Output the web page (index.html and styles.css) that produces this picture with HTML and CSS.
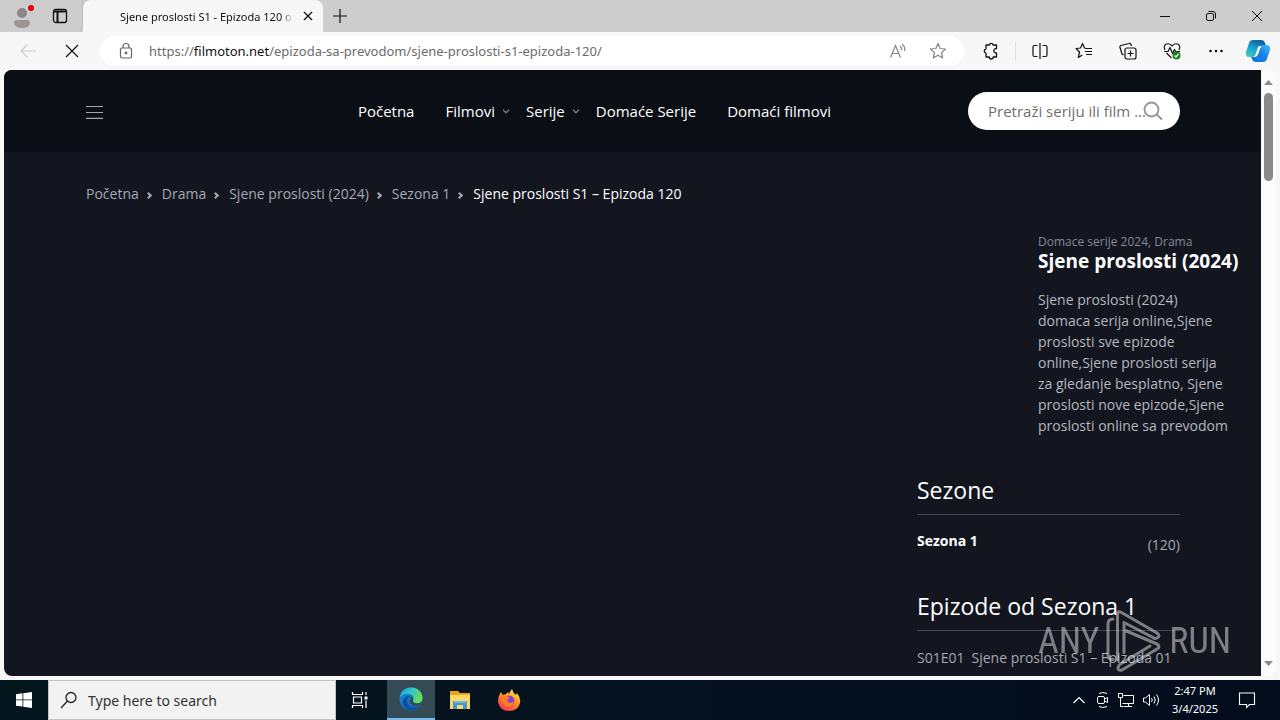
FILE: index.html
```html
<!DOCTYPE html>
<html lang="hr">
<head>
<meta charset="utf-8">
<meta name="viewport" content="width=device-width, initial-scale=1">
<title>Sjene proslosti S1 - Epizoda 120</title>
<link rel="stylesheet" href="styles.css">
</head>
<body>
<div class="desktop">
  <header class="tabbar">
    <div class="tab-tools">
      <button class="icon-btn" aria-label="Profile"><svg width="24" height="28" viewBox="0 0 24 28"><circle cx="11" cy="11" r="5" fill="#8c8684"/><path d="M3 21q0-3 3-3h10q3 0 3 3-1 5-8 5t-8-5z" fill="#9c9693"/><circle cx="20" cy="6" r="3" fill="#e3000b"/></svg></button>
      <button class="icon-btn" aria-label="Tab actions"><svg width="16" height="16" viewBox="0 0 16 16" fill="none" stroke="#111" stroke-width="1.3"><rect x="1.5" y="1.5" width="13" height="13" rx="2"/><path d="M2 3.5h12M5.5 4v10" stroke-width="2"/></svg></button>
    </div>
    <div class="tab">
      <span class="tab-title">Sjene proslosti S1 - Epizoda 120 o</span>
      <button class="icon-btn" aria-label="Close tab"><svg width="10" height="10" viewBox="0 0 10 10" stroke="#111" stroke-width="1.3"><path d="M1 1l8 8M9 1l-8 8"/></svg></button>
    </div>
    <button class="icon-btn new-tab" aria-label="New tab"><svg width="14" height="14" viewBox="0 0 14 14" stroke="#111" stroke-width="1.2"><path d="M7 0v14M0 7h14"/></svg></button>
    <div class="win-controls">
      <button class="icon-btn" aria-label="Minimize"><svg width="12" height="12" viewBox="0 0 12 12" stroke="#111"><path d="M1 6.5h10"/></svg></button>
      <button class="icon-btn" aria-label="Restore"><svg width="12" height="12" viewBox="0 0 12 12" fill="none" stroke="#111"><rect x="1.500" y="3.500" width="7" height="7" rx="1.500"/><path d="M3.500 1.500h4.500q2.500 0 2.500 2.500v4.500"/></svg></button>
      <button class="icon-btn" aria-label="Close"><svg width="12" height="12" viewBox="0 0 12 12" stroke="#111"><path d="M1 1l10 10M11 1L1 11"/></svg></button>
    </div>
  </header>

  <div class="toolbar">
    <button class="icon-btn" aria-label="Back"><svg width="18" height="16" viewBox="0 0 18 16" fill="none" stroke="#ccc" stroke-width="1.2"><path d="M17 8H2M8.500 1.500L2 8l6.500 6.500"/></svg></button>
    <button class="icon-btn" aria-label="Stop"><svg width="14" height="14" viewBox="0 0 14 14" stroke="#111" stroke-width="1.200"><path d="M1 1l12 12M13 1L1 13"/></svg></button>
    <div class="address">
      <svg width="14" height="18" viewBox="0 0 14 18" fill="none" stroke="#666" stroke-width="1.200"><rect x="1.500" y="6" width="11" height="10" rx="1.500"/><path d="M4 6V4.500a3 3 0 0 1 6 0V6"/><circle cx="7" cy="11" r=".8" fill="#666"/></svg>
      <a class="url" href="#"><span>https://</span><b>filmoton.net</b><span>/epizoda-sa-prevodom/sjene-proslosti-s1-epizoda-120/</span></a>
      <button class="icon-btn" aria-label="Read aloud"><svg width="18" height="16" viewBox="0 0 18 16" fill="none" stroke="#858585" stroke-width="1.200"><path d="M1.500 14.500L6.500 2.500l5 12M3 10.500h7M11 3q2 1.500 1.500 4M13 1q3.500 2.500 2.500 7"/></svg></button>
      <button class="icon-btn" aria-label="Add to favorites"><svg width="18" height="18" viewBox="0 0 18 18" fill="none" stroke="#858585" stroke-width="1.200" stroke-linejoin="round"><path d="M9 1.500l2.200 5 5.300.5-4 3.600 1.200 5.400L9 13.200 4.300 16l1.200-5.400-4-3.600 5.300-.5z"/></svg></button>
    </div>
    <div class="actions">
      <button class="icon-btn ext" aria-label="Extensions"><svg width="18" height="18" viewBox="0 0 18 18" fill="none" stroke="#111" stroke-width="1.300" stroke-linejoin="round"><path d="M4 3h3.200a2 2 0 0 1 3.900 0H14.500v3.600h-1a2.200 2.200 0 0 0 0 4.300h1V15h-3.300a2 2 0 0 1-4 0H4v-3.800a2.200 2.200 0 0 1 0-4.300z"/></svg></button>
      <button class="icon-btn" aria-label="Split screen"><svg width="18" height="18" viewBox="0 0 18 18" fill="none" stroke="#111" stroke-width="1.200"><path d="M9 1v16M6.500 3.500H3.500q-1.500 0-1.500 1.500v8q0 1.500 1.500 1.500h3M11.500 3.500h3Q16 3.500 16 5v8q0 1.500-1.500 1.500h-3"/></svg></button>
      <button class="icon-btn" aria-label="Favorites"><svg width="18" height="18" viewBox="0 0 18 18" fill="none" stroke="#111" stroke-width="1.200" stroke-linejoin="round"><path d="M11 6.500L9.500 6 7.500 1.500l-2 4.500-4.500.5 3.500 3.500-1.200 5.500 4-2.500M11 6.500h6M10 9.500h7M11 12.500h6"/></svg></button>
      <button class="icon-btn" aria-label="Collections"><svg width="18" height="18" viewBox="0 0 18 18" fill="none" stroke="#111" stroke-width="1.200"><rect x="6" y="6" width="11" height="11" rx="2"/><path d="M11.500 8.500v6M8.500 11.500h6M4.500 13L3 12 1 5.500q-.5-1.500 1-2L10 1.500q1.500-.5 2 1l.5 1.500"/></svg></button>
      <button class="icon-btn" aria-label="Browser essentials"><svg width="18" height="18" viewBox="0 0 18 18" fill="none" stroke="#111" stroke-width="1.200" stroke-linejoin="round"><path d="M2 8Q0 3.500 3.500 2 7 1 9 4q2-3 5.500-2Q18 3.500 16 8M3.500 11l5 5M1 9.500h4l2-4 2.500 6 2-4 1 2H17"/><circle cx="13.500" cy="13.500" r="4" fill="#198019" stroke="none"/><path d="M11.500 13.500l1.500 1.500 2.500-3" stroke="#fff"/></svg></button>
      <button class="icon-btn" aria-label="Settings and more"><svg width="18" height="18" viewBox="0 0 18 18" fill="#111"><circle cx="3.500" cy="9" r="1.300"/><circle cx="9" cy="9" r="1.300"/><circle cx="14.500" cy="9" r="1.300"/></svg></button>
      <button class="icon-btn copilot" aria-label="Copilot"><svg width="26" height="24" viewBox="0 0 26 24"><defs><linearGradient id="ca" x1="0" y1="1" x2=".6" y2="0"><stop offset="0" stop-color="#55d1a0"/><stop offset=".5" stop-color="#17a8d8"/><stop offset="1" stop-color="#125f9f"/></linearGradient><linearGradient id="cb" x1="0" y1="1" x2="1" y2="0"><stop offset="0" stop-color="#0876dc"/><stop offset=".5" stop-color="#1b7fe8"/><stop offset="1" stop-color="#36c0f5"/></linearGradient></defs><path d="M8 1h8q3 0 4 3l1 3h-4q-3 0-4 3l-2 5q-1 3-4 3H4q-4 0-3-5l3-9q1-3 4-3z" fill="url(#ca)"/><path d="M18 6h3q5 0 4 5l-3 9q-1 3-4 3h-7q-3 0-4-3l-1-2h3q3 0 4-3l2-6q1-3 3-3z" fill="url(#cb)"/><path d="M14 7h3q-2 1-2.500 4L13 15q-1 2-3 2.500H9q1.500-1 2-3l1.500-5q.5-2 1.500-2.500z" fill="#fff"/></svg></button>
    </div>
  </div>

  <div class="viewport">
    <div class="page">
      <div class="site-header">
        <button class="icon-btn" aria-label="Izbornik"><svg width="17" height="15" viewBox="0 0 17 15" stroke="#a5a7ad" stroke-width="1.200"><path d="M0 2.500h17M0 8.500h17M0 14.400h17"/></svg></button>
        <nav class="main-nav">
          <a class="plain" href="#">Početna</a>
          <a href="#">Filmovi<svg width="8" height="5" viewBox="0 0 8 5" fill="none" stroke="#74777f" stroke-width="1.400"><path d="M1 .8l3 3 3-3"/></svg></a>
          <a href="#">Serije<svg width="8" height="5" viewBox="0 0 8 5" fill="none" stroke="#74777f" stroke-width="1.400"><path d="M1 .8l3 3 3-3"/></svg></a>
          <a class="plain" href="#">Domaće Serije</a>
          <a href="#">Domaći filmovi</a>
        </nav>
        <form class="search">
          <input type="text" aria-label="Pretraži" placeholder="Pretraži seriju ili film ...">
          <button class="icon-btn" type="button" aria-label="Traži"><svg width="20" height="20" viewBox="0 0 20 20" fill="none" stroke="#949494" stroke-width="1.800"><circle cx="8.500" cy="8.500" r="7"/><path d="M13.500 13.500l5.500 5"/></svg></button>
        </form>
      </div>
      <nav class="crumbs" aria-label="Putanja">
        <a href="#">Početna</a><i></i><a href="#">Drama</a><i></i><a href="#">Sjene proslosti (2024)</a><i></i><a href="#">Sezona 1</a><i></i><span>Sjene proslosti S1 – Epizoda 120</span>
      </nav>
      <main class="columns">
        <div class="player"></div>
        <aside class="sidebar">
          <article class="summary">
            <p class="genres"><a href="#">Domace serije 2024</a>, <a href="#">Drama</a></p>
            <h1>Sjene proslosti (2024)</h1>
            <p class="about">Sjene proslosti (2024)<br>domaca serija online,Sjene<br>proslosti sve epizode<br>online,Sjene proslosti serija<br>za gledanje besplatno, Sjene<br>proslosti nove epizode,Sjene<br>proslosti online sa prevodom</p>
          </article>
          <section class="block">
            <h2>Sezone</h2>
            <div class="season"><a href="#">Sezona 1</a><span>(120)</span></div>
          </section>
          <section class="block episodes">
            <h2>Epizode od Sezona 1</h2>
            <a class="episode" href="#"><span>S01E01</span><span>Sjene proslosti S1 – Epizoda 01</span></a>
          </section>
        </aside>
      </main>
    </div>
    <div class="scrollbar">
      <svg width="9" height="5" viewBox="0 0 9 5"><path d="M0 5L4.500 0 9 5z" fill="#8a8a8a"/></svg>
      <div class="thumb"></div>
      <svg width="9" height="5" viewBox="0 0 9 5"><path d="M0 0l4.500 5L9 0z" fill="#8a8a8a"/></svg>
    </div>
  </div>

  <footer class="taskbar">
    <button class="icon-btn start" aria-label="Start"><svg width="16" height="16" viewBox="0 0 16 16" fill="#fff"><path d="M0 2.200L6.500 1.300v6.200H0zM7.300 1.200L16 0v7.500H7.300zM0 8.300h6.500v6.300L0 13.700zM7.300 8.300H16V16l-8.700-1.200z"/></svg></button>
    <label class="task-search"><svg width="18" height="18" viewBox="0 0 18 18" fill="none" stroke="#222" stroke-width="1.300"><circle cx="11" cy="6.500" r="5"/><path d="M7.500 10L1 17"/></svg><input type="text" placeholder="Type here to search"></label>
    <button class="icon-btn task" aria-label="Task View"><svg width="18" height="18" viewBox="0 0 18 18" fill="none" stroke="#fff" stroke-width="1.200"><path d="M1.500 1v2.500h10V1M1.500 17v-2.500h10V17M2.500 6h8v6h-8zM15 1v3M15 9.500V17"/><path d="M13.500 5.500h3v3h-3z" fill="#fff" stroke="none"/></svg></button>
    <button class="icon-btn task active" aria-label="Microsoft Edge"><svg width="24" height="24" viewBox="0 0 24 24"><defs><linearGradient id="ea" x1="0" y1="0" x2="1" y2=".4"><stop offset="0" stop-color="#1f9fdc"/><stop offset=".5" stop-color="#31c4cd"/><stop offset="1" stop-color="#6bdc5a"/></linearGradient><linearGradient id="eb" x1="0" y1="0" x2="1" y2="1"><stop offset="0" stop-color="#1991dc"/><stop offset="1" stop-color="#1257a8"/></linearGradient></defs><circle cx="12" cy="12" r="11.500" fill="url(#eb)"/><path d="M.8 10Q3 .5 12 .5q10 0 11.500 9.500.5 6-5.500 6.500-5 0-4-3 1.500-3-1-5.500Q7 4.500.8 10z" fill="url(#ea)"/><path d="M11 9q-5 3-2 8.500 4 5 11 2-5 5-11 3-6-3-5-9 1.500-5 7-4.500z" fill="#0c4f9c"/><path d="M14 12q-1 4 4 4.500 3 0 5-2l-1.500 3.500q-5 2.500-9-.5-3-3-.5-7.500 2 0 2 2z" fill="#344b55"/></svg></button>
    <button class="icon-btn task" aria-label="File Explorer"><svg width="22" height="20" viewBox="0 0 22 20"><path d="M1 1h8l2 2h10v16H1z" fill="#e9a51e"/><path d="M1 5h20v14H1z" fill="#ffd668"/><path d="M4 19v-8h14v8h-4v-4H8v4z" fill="#3c98d5"/><path d="M5 11h12v2H5z" fill="#6dbbe8"/></svg></button>
    <button class="icon-btn task" aria-label="Firefox"><svg width="24" height="24" viewBox="0 0 24 24"><defs><linearGradient id="ff" x1=".8" y1="0" x2=".2" y2="1"><stop offset="0" stop-color="#fff04f"/><stop offset=".45" stop-color="#ff9120"/><stop offset="1" stop-color="#f72b5b"/></linearGradient></defs><path d="M4 4l2 3 3-1 2-2 1 2q1-3 3-5 1 4 4 6l1-2q4 5 3 10-2 8-11 8T1 14q0-6 3-10z" fill="url(#ff)"/><circle cx="12" cy="13" r="5.500" fill="#843ed6"/><path d="M5 9q4-3 8 1l-3 2 1 2q3 2 6-1-1 6-6 6-6-1-6-10z" fill="#ff7d27"/></svg></button>
    <div class="tray">
      <button class="icon-btn more" aria-label="Show hidden icons"><svg width="14" height="8" viewBox="0 0 14 8" fill="none" stroke="#fff" stroke-width="1.200"><path d="M1.500 7L7 1.500 12.500 7"/></svg></button>
      <button class="icon-btn" aria-label="Meet Now"><svg width="14" height="18" viewBox="0 0 14 18" fill="none" stroke="#fff"><rect x="1.500" y="5.500" width="7" height="7" rx="1.500"/><path d="M8.500 8l3-1.500v5l-3-1.500M3 2.500q4-2 8 0M3 15.500q4 2 8 0"/></svg></button>
      <button class="icon-btn" aria-label="Network"><svg width="18" height="16" viewBox="0 0 18 16" fill="none" stroke="#fff"><path d="M6.500 3.500h10v8h-11M11.500 11.500v3M7 14.500h8M1.500 1.500h4v4h-4zM3.500 5.500v9h3"/></svg></button>
      <button class="icon-btn" aria-label="Volume"><svg width="18" height="16" viewBox="0 0 18 16" fill="none" stroke="#fff"><path d="M1.500 6h2l4-3.500v11L3.500 10h-2zM9.500 6q1.500 2 0 4M12 4.500q2.500 3.500 0 7M14.500 2.500q4 5.500 0 11"/></svg></button>
    </div>
    <time class="clock">2:47 PM<br>3/4/2025</time>
    <button class="icon-btn notes" aria-label="Notifications"><svg width="18" height="18" viewBox="0 0 18 18" fill="none" stroke="#fff" stroke-width="1.100"><path d="M1.500 2h15v11.500h-5L8.500 16.500v-3h-7z"/></svg></button>
  </footer>

  <div class="watermark" aria-hidden="true"><span>ANY</span><svg width="56" height="62" viewBox="0 0 56 62" fill="none" stroke="#fff" stroke-width="3" stroke-linejoin="round" stroke-linecap="round"><path d="M7 9q-5 0-5 5v31q0 5 5 4.500M11.500 50V5q0-5 4-2.500L51 23q4 3 0 5-2 1-4-.5L18 12.500v30M18 20l33 14q4 3 0 5L16 60q-4 1-4-2t4-5l28-17"/></svg><span>RUN</span></div>
</div>
</body>
</html>
```

FILE: styles.css
```css
* { box-sizing: border-box; }
body { margin: 0; font-family: "Open Sans", "Noto Sans", sans-serif; font-size: 14px; }
p, h1, h2 { margin: 0; }
a { color: inherit; text-decoration: none; }
svg { display: block; flex: none; }
.icon-btn { display: flex; align-items: center; justify-content: center; padding: 0; border: 0; background: none; }

.desktop { position: relative; display: flex; flex-direction: column; height: 100vh; overflow: hidden; background: #f7f7f7; }

/* Browser chrome */
.tabbar { display: flex; height: 32px; background: #cdcdcd; }
.tab-tools { display: flex; align-items: center; gap: 17px; width: 83px; padding-left: 11px; border-right: 1px solid #bbb; border-radius: 0 0 6px 0; }
.tab { display: flex; align-items: center; gap: 9px; width: 240px; padding: 0 10px 0 37px; background: #f7f7f7; border-radius: 8px 8px 0 0; }
.tab-title { flex: 1; overflow: hidden; white-space: nowrap; font-family: "Noto Sans", sans-serif; font-size: 11px; color: #111; -webkit-mask-image: linear-gradient(90deg, #000 92%, transparent); mask-image: linear-gradient(90deg, #000 92%, transparent); }
.new-tab { width: 34px; }
.win-controls { display: flex; gap: 34px; margin-left: auto; padding-right: 17px; }

.toolbar { display: flex; align-items: center; height: 38px; padding: 0 9px 0 19px; gap: 28px; }
.address { display: flex; flex: 1; align-items: center; height: 30px; margin-left: -7px; padding: 0 17px 0 19px; gap: 22px; background: #fff; border-radius: 15px; }
.url { flex: 1; margin-left: -6px; white-space: nowrap; overflow: hidden; font-family: "Noto Sans", sans-serif; font-size: 13px; color: #6b6b6b; }
.url b { font-weight: 400; color: #111; }
.actions { display: flex; align-items: center; gap: 26px; margin-left: -10px; }
.ext { padding-right: 15px; border-right: 1px solid #ddd; margin-right: -11px; }
.copilot { margin-left: -6px; }

/* Page */
.viewport { display: flex; flex: 1; min-height: 0; margin: 0 4px 4px; border-radius: 8px; overflow: hidden; background: #fcfcfc; }
.page { flex: 1; min-width: 0; overflow: hidden; background: #13161f; color: #a5a8b1; }
.site-header { display: flex; align-items: center; height: 82px; padding: 0 81px 0 82px; background: #0c0e16; }
.main-nav { display: flex; gap: 16px; margin-left: auto; margin-right: 137px; font-size: 15px; color: #fff; white-space: nowrap; }
.main-nav a { display: flex; align-items: center; gap: 7px; }
.main-nav .plain { padding-right: 15px; }
.search { display: flex; align-items: center; width: 212px; height: 38px; padding: 0 17px 0 20px; background: #fff; border-radius: 19px; }
.search input { flex: 1; min-width: 0; margin-right: -5px; padding: 0; border: 0; outline: 0; background: none; font: inherit; font-size: 15px; }
.search input::placeholder { color: #6f6f6f; opacity: 1; }
.crumbs { display: flex; align-items: center; padding: 32px 81px 0 82px; line-height: 20px; white-space: nowrap; }
.crumbs i { width: 5px; height: 5px; margin: 2px 11px 0 7px; border: solid #a5a8b1; border-width: 2px 2px 0 0; rotate: 45deg; }
.crumbs span { color: #fff; }
.columns { display: flex; padding: 30px 81px 0 82px; }
.player { flex: 1; }
.sidebar { width: 263px; }
.summary { width: 200px; margin-left: 121px; white-space: nowrap; }
.genres { font-size: 12px; line-height: 16px; color: #85889a; }
.summary h1 { font-size: 19px; line-height: 22px; font-weight: 700; color: #fff; }
.about { margin-top: 17px; line-height: 21px; color: #b4b7be; }
.block { padding-top: 37px; }
.block h2 { padding-bottom: 7px; border-bottom: 1px solid #434650; font-size: 23px; line-height: 34px; font-weight: 400; color: #fff; }
.episodes { padding-top: 34px; }
.season { display: flex; justify-content: space-between; padding-top: 16px; line-height: 20px; }
.season a { font-weight: 700; color: #fff; }
.season span { padding-top: 4px; }
.episode { display: flex; gap: 7px; padding-top: 17px; line-height: 20px; white-space: nowrap; }

.scrollbar { display: flex; flex-direction: column; align-items: center; width: 15px; padding: 10px 0; }
.thumb { width: 9px; height: 88px; margin: 8px 0 auto; background: #8a8a8a; border-radius: 5px; }

/* Taskbar */
.taskbar { display: flex; height: 40px; background: linear-gradient(90deg, #04171f, #04101e 60%, #030c1c); color: #fff; }
.start { width: 48px; }
.task-search { display: flex; align-items: center; gap: 10px; width: 288px; padding-left: 11px; background: #f2f2f2; border: 1px solid #c4c4c4; }
.task-search input { flex: 1; min-width: 0; padding: 0; border: 0; outline: 0; background: none; font: 14px "Noto Sans", sans-serif; }
.task-search input::placeholder { color: #333; opacity: 1; }
.task { width: 48px; margin-right: 1px; }
.active { margin-left: 2px; background: #344b55; border-bottom: 2px solid #76b9ed; }
.tray { display: flex; align-items: center; gap: 7px; margin-left: auto; }
.more { margin-right: 3px; }
.clock { width: 70px; text-align: center; font-family: "Noto Sans", sans-serif; font-size: 11px; line-height: 18px; padding-top: 2px; }
.notes { width: 34px; margin-right: 16px; }

.watermark { position: absolute; right: 49px; bottom: 48px; display: flex; align-items: center; gap: 7px; opacity: .45; color: #fff; font-family: "Liberation Sans Narrow", "Roboto Condensed", Roboto, sans-serif; font-size: 36px; line-height: 62px; pointer-events: none; }
```
